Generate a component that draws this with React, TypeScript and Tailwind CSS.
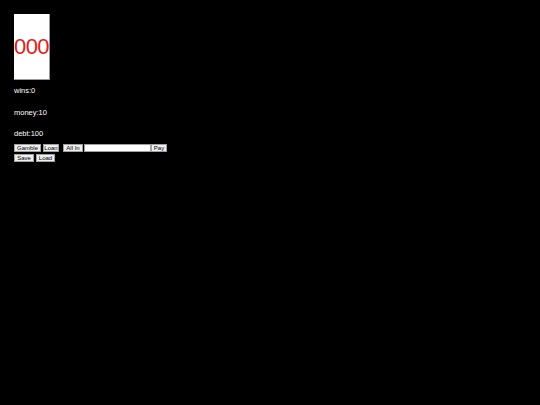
export default function App() {
  const btn =
    'h-[8px] p-0 bg-[#efefef] border border-[#a0a0a0] text-[6px] leading-none whitespace-nowrap text-black flex items-center justify-center overflow-hidden shrink-0'

  return (
    <div className="min-h-[405px] bg-black pl-[14px] pt-[14px] font-['Liberation_Sans',Arial,sans-serif]">
      <div className="w-[36px] h-[66px] bg-white border-r border-b border-[#9a9a9a] flex items-center justify-center">
        <span className="text-[22px] leading-none text-[#e0201c] tracking-[-0.5px]">000</span>
      </div>

      <p className="mt-[6px] h-[9px] text-[7.5px] leading-[9px] text-white">wins:0</p>
      <p className="mt-[13px] h-[9px] text-[7.5px] leading-[9px] text-white">money:10</p>
      <p className="mt-[12px] h-[9px] text-[7.5px] leading-[9px] text-white">debt:100</p>

      <div className="mt-[6px] flex items-center h-[8px]">
        <button type="button" className={`${btn} w-[27px]`}>Gamble</button>
        <button type="button" className={`${btn} w-[16px] ml-[2px]`}>Loan</button>
        <button type="button" className={`${btn} w-[20px] ml-[4px]`}>All In</button>
        <input
          type="text"
          className="h-[8px] w-[67px] ml-[1px] shrink-0 bg-white border border-[#a0a0a0] outline-none"
        />
        <button type="button" className={`${btn} w-[16px]`}>Pay</button>
      </div>
      <div className="mt-[2px] flex items-center h-[8px]">
        <button type="button" className={`${btn} w-[20px]`}>Save</button>
        <button type="button" className={`${btn} w-[19px] ml-[2px]`}>Load</button>
      </div>
    </div>
  )
}
